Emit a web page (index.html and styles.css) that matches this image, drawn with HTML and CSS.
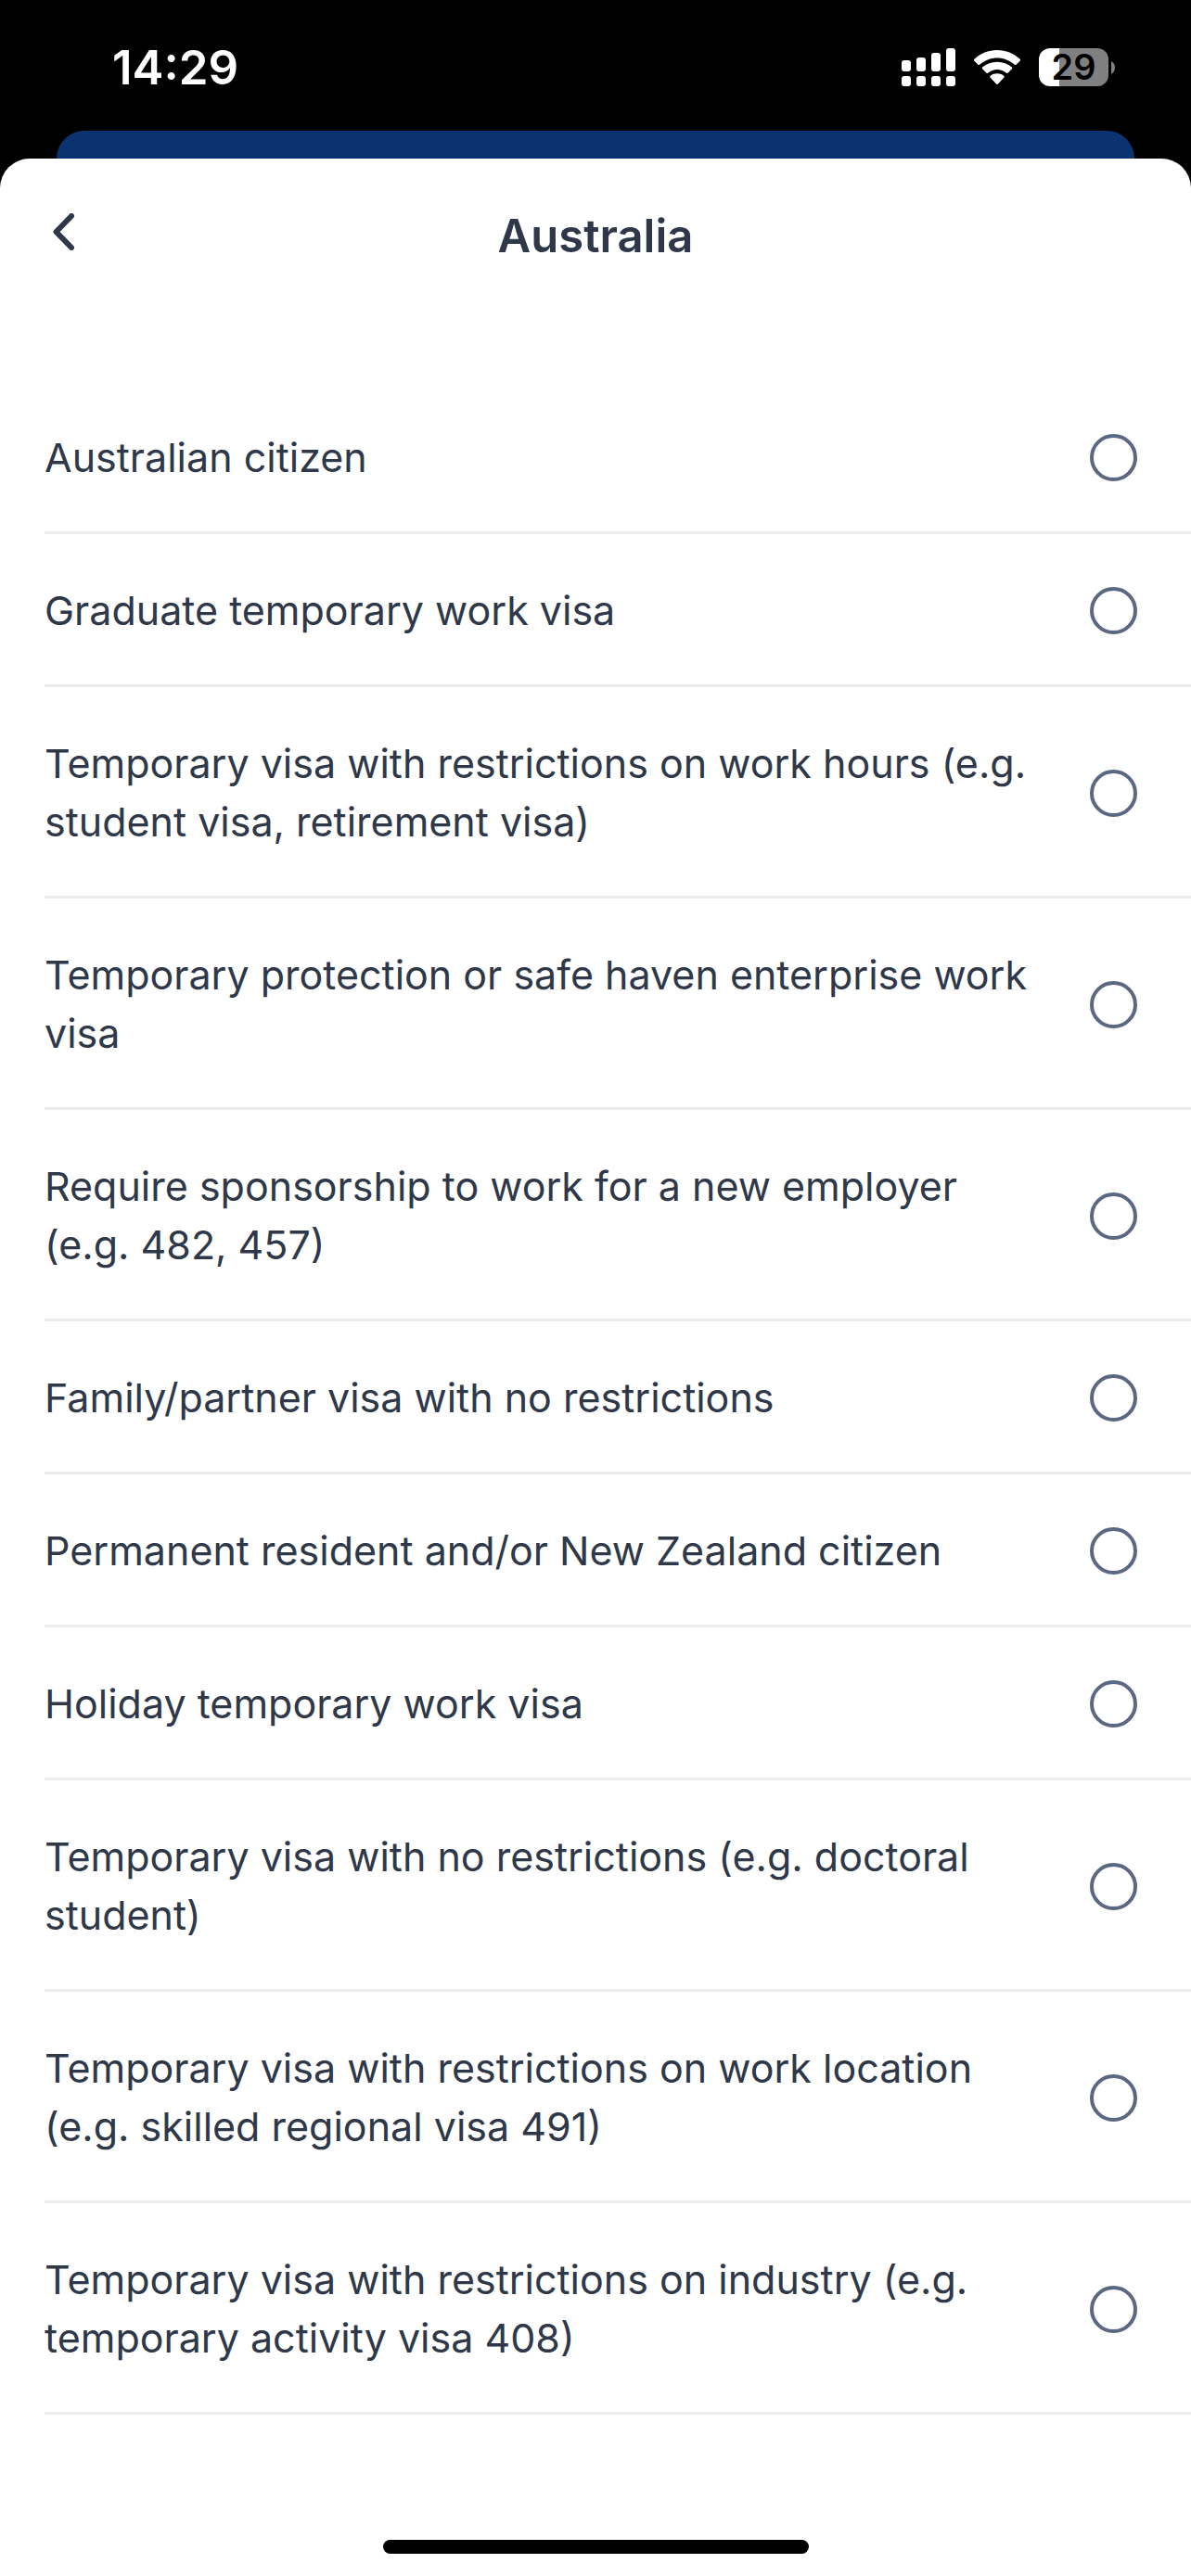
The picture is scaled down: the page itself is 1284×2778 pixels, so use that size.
FILE: index.html
```html
<!DOCTYPE html>
<html lang="en">

<head>
  <meta charset="UTF-8">
  <meta name="viewport" content="width=device-width, initial-scale=1.0">
  <title>Australia</title>

  <link rel="stylesheet" href="styles.css">
</head>

<body>
  <div class="status-bar">
    <time class="clock">14:29</time>
    <div class="status-icons">
      <svg class="signal" width="58" height="41" viewBox="0 0 58 41" fill="#fff">
        <rect x="0" y="13" width="10" height="12" rx="3" />
        <rect x="16" y="10" width="10" height="15" rx="3" />
        <rect x="32" y="5" width="10" height="20" rx="3" />
        <rect x="48" y="0" width="10" height="25" rx="3" />
        <rect x="0" y="30" width="10" height="11" rx="3" />
        <rect x="16" y="30" width="10" height="11" rx="3" />
        <rect x="32" y="30" width="10" height="11" rx="3" />
        <rect x="48" y="30" width="10" height="11" rx="3" />
      </svg>
      <svg class="wifi" width="50" height="38" viewBox="0 0 50 38" fill="#fff">
        <path d="M.6 9.6C7 3.6 15.5 0 25 0s18 3.600 24.400 9.600c.8.700.8 1.500.1 2.200l-3.700 3.700c-.7.700-1.500.7-2.200.1C38.700 11 32.200 8.400 25 8.400S11.300 11 6.400 15.600c-.7.600-1.500.6-2.200-.1L.5 11.800c-.7-.7-.7-1.500.1-2.200z" />
        <path d="M9.400 18.300C13.500 14.900 19 12.800 25 12.800s11.500 2.100 15.600 5.500c.8.700.8 1.500.1 2.200l-3.900 3.900c-.7.700-1.400.6-2.200 0C32 22.300 28.700 21 25 21s-7 1.300-9.600 3.400c-.8.600-1.500.7-2.200 0l-3.900-3.900c-.7-.7-.7-1.500.1-2.200z" />
        <path d="M18 27.600c1.900-1.500 4.300-2.300 7-2.300s5.100.8 7 2.300c.9.700.9 1.500.2 2.200l-6 6.400c-.8.900-1.600.9-2.400 0l-6-6.400c-.7-.7-.7-1.500.2-2.200z" />
      </svg>
      <div class="battery">
        <span class="level">29</span>
        <svg class="cap" width="4" height="14" viewBox="0 0 4 14" fill="#808080">
          <path d="M0 0c2.500 1.200 4 3.800 4 7s-1.500 5.800-4 7z" />
        </svg>
      </div>
    </div>
  </div>

  <div class="backdrop"></div>

  <main class="sheet">
    <header class="header">
      <button class="back" type="button" aria-label="Back">
        <svg width="24" height="40" viewBox="0 0 24 40" fill="none" stroke="#2e3849" stroke-width="6" stroke-linecap="round" stroke-linejoin="round">
          <path d="M20 3L3.500 20L20 37" />
        </svg>
      </button>
      <h1 class="title">Australia</h1>
    </header>

    <form class="options">
      <label class="option">
        <span>Australian citizen</span>
        <input type="radio" name="visa">
      </label>
      <label class="option">
        <span>Graduate temporary work visa</span>
        <input type="radio" name="visa">
      </label>
      <label class="option">
        <span>Temporary visa with restrictions on work hours (e.g. student visa, retirement visa)</span>
        <input type="radio" name="visa">
      </label>
      <label class="option">
        <span>Temporary protection or safe haven enterprise work visa</span>
        <input type="radio" name="visa">
      </label>
      <label class="option">
        <span>Require sponsorship to work for a new employer (e.g. 482, 457)</span>
        <input type="radio" name="visa">
      </label>
      <label class="option">
        <span>Family/partner visa with no restrictions</span>
        <input type="radio" name="visa">
      </label>
      <label class="option">
        <span>Permanent resident and/or New Zealand citizen</span>
        <input type="radio" name="visa">
      </label>
      <label class="option">
        <span>Holiday temporary work visa</span>
        <input type="radio" name="visa">
      </label>
      <label class="option">
        <span>Temporary visa with no restrictions (e.g. doctoral student)</span>
        <input type="radio" name="visa">
      </label>
      <label class="option">
        <span>Temporary visa with restrictions on work location (e.g. skilled regional visa 491)</span>
        <input type="radio" name="visa">
      </label>
      <label class="option">
        <span>Temporary visa with restrictions on industry (e.g. temporary activity visa 408)</span>
        <input type="radio" name="visa">
      </label>
    </form>

    <div class="home-indicator"></div>
  </main>
</body>

</html>
```
FILE: styles.css
```css
* {
  box-sizing: border-box;
  margin: 0;
  padding: 0;
}

body {
  display: flex;
  flex-direction: column;
  min-height: 100vh;
  background-color: #000;
  color: #2e3849;
  font-family: Inter, "Liberation Sans", sans-serif;
}

/* status bar */
.status-bar {
  display: flex;
  justify-content: space-between;
  align-items: center;
  height: 141px;
  padding: 4px 82px 0 121px;
}

.clock {
  color: #fff;
  font-size: 51px;
  font-weight: 600;
}

.status-icons {
  display: flex;
  align-items: center;
  gap: 20px;
}

.battery {
  display: flex;
  align-items: center;
  gap: 3px;
}

.battery .level {
  width: 75px;
  height: 41px;
  border-radius: 12px;
  background: linear-gradient(to right, #fff 22px, #808080 22px);
  color: #000;
  font-size: 38px;
  font-weight: 600;
  line-height: 41px;
  text-align: center;
}

/* the page behind the sheet */
.backdrop {
  height: 30px;
  margin: 0 61px;
  border-radius: 30px 30px 0 0;
  background-color: #0c326f;
}

.sheet {
  flex: 1;
  display: flex;
  flex-direction: column;
  border-radius: 32px 32px 0 0;
  background-color: #fff;
}

.header {
  display: grid;
  grid-template-columns: 100px 1fr 100px;
  align-items: center;
  height: 166px;
  margin-bottom: 74px;
}

.back {
  display: flex;
  align-items: center;
  height: 100px;
  padding-left: 57px;
  padding-bottom: 8px;
  border: none;
  background: none;
  cursor: pointer;
}

.title {
  font-size: 49px;
  font-weight: 600;
  text-align: center;
}

/* options */
.option {
  display: flex;
  justify-content: space-between;
  align-items: center;
  gap: 56px;
  margin-left: 48px;
  padding: 51px 58px 48px 0;
  border-bottom: 3px solid #ebebeb;
  font-size: 43px;
  line-height: 63px;
  cursor: pointer;
}

.option input {
  flex: none;
  width: 51px;
  height: 51px;
  border: 4px solid #5b6882;
  border-radius: 50%;
  appearance: none;
  cursor: pointer;
}

.option input:checked {
  background-color: #5b6882;
  box-shadow: inset 0 0 0 8px #fff;
}

.home-indicator {
  width: 459px;
  height: 15px;
  margin: auto auto 24px;
  border-radius: 8px;
  background-color: #000;
}
```
